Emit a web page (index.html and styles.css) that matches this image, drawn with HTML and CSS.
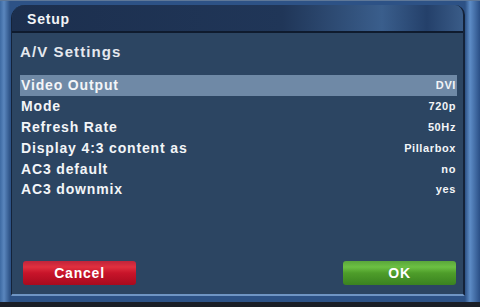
FILE: index.html
```html
<!DOCTYPE html>
<html>
<head>
  <title>Setup</title>
  <link rel="stylesheet" href="styles.css">
</head>
<body>
  <div class="frame">
    <div class="window">
      <div class="title-bar">Setup</div>
      <div class="panel">
        <h1 class="panel-title">A/V Settings</h1>
        <ul class="settings">
          <li class="setting selected"><span>Video Output</span><span class="value">DVI</span></li>
          <li class="setting"><span>Mode</span><span class="value">720p</span></li>
          <li class="setting"><span>Refresh Rate</span><span class="value">50Hz</span></li>
          <li class="setting"><span>Display 4:3 content as</span><span class="value">Pillarbox</span></li>
          <li class="setting"><span>AC3 default</span><span class="value">no</span></li>
          <li class="setting"><span>AC3 downmix</span><span class="value">yes</span></li>
        </ul>
        <div class="buttons">
          <button class="btn btn-cancel">Cancel</button>
          <button class="btn btn-ok">OK</button>
        </div>
      </div>
    </div>
  </div>
</body>
</html>
```

FILE: styles.css
```css
body {
  margin: 0;
  padding: 0;
  background-color: #111;
  font-family: "Liberation Sans", Arial, sans-serif;
}

.frame {
  width: 480px;
  height: 307px;
  box-sizing: border-box;
  padding: 4px 15px 6px 11px;
  background: linear-gradient(to right, #3d6aa3 0, #5a86bd 4px, #2d5286 10px, #2d5286 465px, #5d8cc6 470px, #2a4f86 480px);
  border-top: 1px solid #5f7898;
  border-bottom: 5px solid #1a1e26;
}

.window {
  height: 100%;
  display: flex;
  flex-direction: column;
  background-color: #2c4562;
  border-left: 1px solid #14233a;
  border-right: 2px solid #14233a;
  border-bottom: 2px solid #6f95c4;
  box-sizing: border-box;
  border-radius: 14px 10px 0 0;
  overflow: hidden;
}

.title-bar {
  height: 28px;
  box-sizing: border-box;
  padding: 6px 0 0 15px;
  background: linear-gradient(to right, #1c2f4e 0, #203658 60%, #3a5e8c 82%, #24406a 92%, #3a5c88 100%);
  border-bottom: 2px solid #0f1b2e;
  color: #f2f4f7;
  font-size: 14px;
  font-weight: bold;
  letter-spacing: 0.8px;
}

.panel {
  flex: 1;
  display: flex;
  flex-direction: column;
  padding: 10px 6px 0 8px;
}

.panel-title {
  margin: 0 0 15px;
  font-size: 15px;
  font-weight: bold;
  letter-spacing: 1.1px;
  color: #e4e8ee;
}

.settings {
  list-style: none;
  margin: 0;
  padding: 0;
}

.setting {
  display: flex;
  justify-content: space-between;
  align-items: center;
  height: 20.8px;
  padding: 0 1px 0 1px;
  color: #f3f5f8;
  font-size: 14px;
  font-weight: bold;
  letter-spacing: 0.85px;
}

.setting.selected {
  background-color: #6f89a6;
}

.value {
  font-size: 11px;
  letter-spacing: 0.6px;
}

.buttons {
  display: flex;
  justify-content: space-between;
  margin-top: auto;
  padding: 0 1px 9px 3px;
}

.btn {
  width: 113px;
  height: 24px;
  border: none;
  border-radius: 3px;
  color: #fff;
  font-family: "Liberation Sans", Arial, sans-serif;
  font-size: 14px;
  font-weight: bold;
  letter-spacing: 0.8px;
}

.btn-cancel {
  background: linear-gradient(to bottom, #c0243a 0, #e0303f 25%, #c8142a 50%, #a90a1e 100%);
}

.btn-ok {
  background: linear-gradient(to bottom, #5aa63a 0, #6cc043 25%, #4e9d2a 50%, #3a8220 100%);
}
```
